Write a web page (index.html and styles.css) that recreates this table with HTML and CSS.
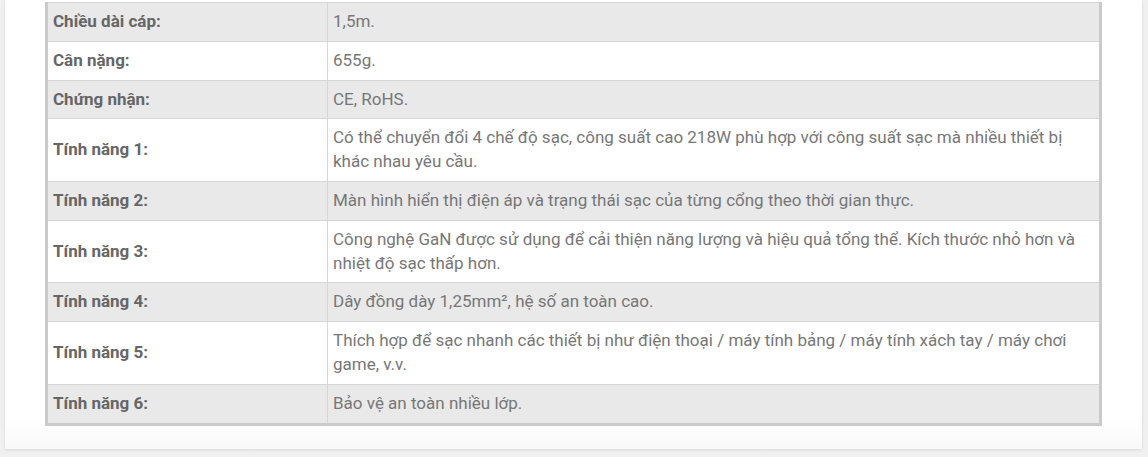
FILE: index.html
```html
<!DOCTYPE html>
<html lang="vi">
<head>
<meta charset="utf-8">
<title>Thông số kỹ thuật</title>
<link rel="stylesheet" href="styles.css">
</head>
<body>
<div class="page">
  <div class="card">
    <table class="specs">
      <tbody>
        <tr class="alt"><th>Chiều dài cáp:</th><td>1,5m.</td></tr>
        <tr><th>Cân nặng:</th><td>655g.</td></tr>
        <tr class="alt"><th>Chứng nhận:</th><td>CE, RoHS.</td></tr>
        <tr><th>Tính năng 1:</th><td>Có thể chuyển đổi 4 chế độ sạc, công suất cao 218W phù hợp với công suất sạc mà nhiều thiết bị khác nhau yêu cầu.</td></tr>
        <tr class="alt"><th>Tính năng 2:</th><td>Màn hình hiển thị điện áp và trạng thái sạc của từng cổng theo thời gian thực.</td></tr>
        <tr><th>Tính năng 3:</th><td>Công nghệ GaN được sử dụng để cải thiện năng lượng và hiệu quả tổng thể. Kích thước nhỏ hơn và nhiệt độ sạc thấp hơn.</td></tr>
        <tr class="alt"><th>Tính năng 4:</th><td>Dây đồng dày 1,25mm², hệ số an toàn cao.</td></tr>
        <tr><th>Tính năng 5:</th><td>Thích hợp để sạc nhanh các thiết bị như điện thoại / máy tính bảng / máy tính xách tay / máy chơi game, v.v.</td></tr>
        <tr class="alt"><th>Tính năng 6:</th><td>Bảo vệ an toàn nhiều lớp.</td></tr>
      </tbody>
    </table>
  </div>
</div>
</body>
</html>
```
FILE: styles.css
```css
html, body {
  margin: 0;
  padding: 0;
  background: #f0f0f0;
}
body {
  font-family: Roboto, "Liberation Sans", Arial, sans-serif;
}
.page {
  padding: 0 6px 0 5px;
  height: 457px;
  box-sizing: border-box;
}
.card {
  background: #ffffff;
  padding: 2px 40px 23px 40px;
  box-shadow: 0 1px 3px rgba(0, 0, 0, 0.10);
  background-image: linear-gradient(to bottom, #ffffff 0, #ffffff 420px, #f8f8f8 100%);
}
.specs {
  width: 1057px;
  border-collapse: collapse;
  border-left: 3px solid #cacaca;
  border-right: 3px solid #cacaca;
  border-bottom: 3px solid #cacaca;
  border-top: 1px solid #d6d6d6;
  font-size: 17px;
  line-height: 1.4;
}
.specs th,
.specs td {
  padding: 7px 5px;
  border-top: 1px solid #d6d6d6;
  vertical-align: middle;
  text-align: left;
}
.specs th {
  width: 269px;
  font-weight: 700;
  color: #666666;
  border-right: 1px solid #d6d6d6;
}
.specs td {
  color: #777777;
  font-weight: 400;
}
.specs tr.alt th,
.specs tr.alt td {
  background: #e9e9e9;
}
```
